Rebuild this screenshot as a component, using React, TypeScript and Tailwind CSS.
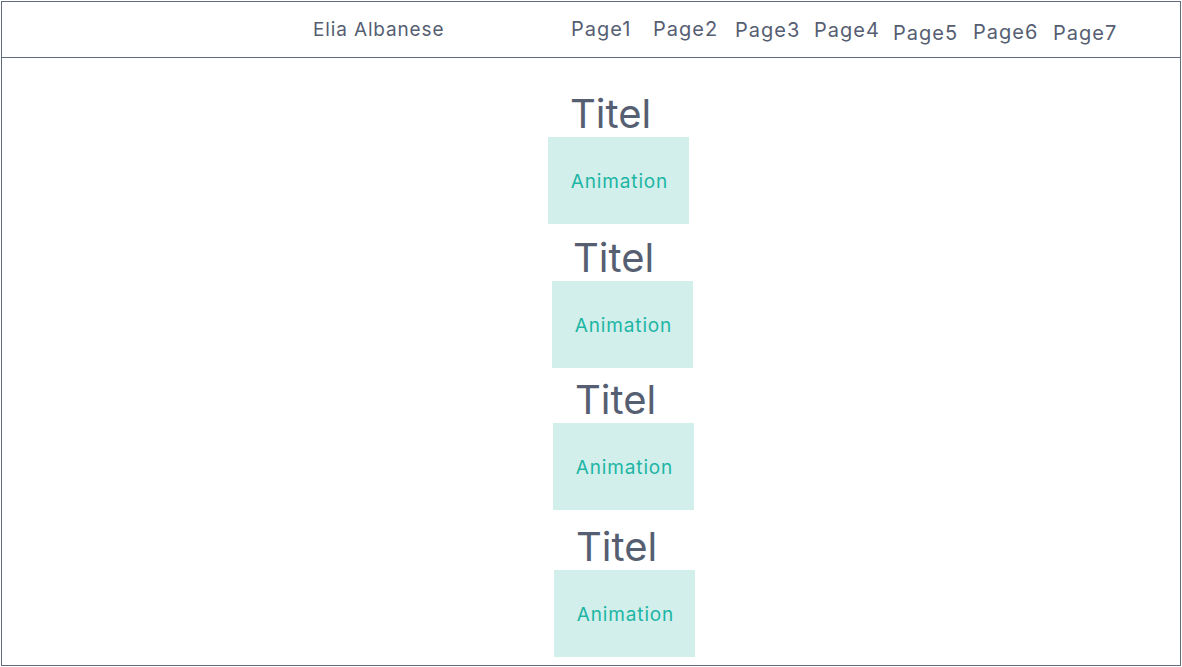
const pages = [
  { label: 'Page1', w: 'w-[82px]', mt: 'mt-0' },
  { label: 'Page2', w: 'w-[82px]', mt: 'mt-0' },
  { label: 'Page3', w: 'w-[79px]', mt: 'mt-[1px]' },
  { label: 'Page4', w: 'w-[79px]', mt: 'mt-[1px]' },
  { label: 'Page5', w: 'w-[80px]', mt: 'mt-[4px]' },
  { label: 'Page6', w: 'w-[80px]', mt: 'mt-[3px]' },
  { label: 'Page7', w: 'w-[80px]', mt: 'mt-[4px]' },
];

const sections = [
  { titleMl: 'ml-[568px]', titleMt: 'mt-[36px]', boxMl: 'ml-[546px]' },
  { titleMl: 'ml-[571px]', titleMt: 'mt-[14px]', boxMl: 'ml-[550px]' },
  { titleMl: 'ml-[573px]', titleMt: 'mt-[12px]', boxMl: 'ml-[551px]' },
  { titleMl: 'ml-[574px]', titleMt: 'mt-[17px]', boxMl: 'ml-[552px]' },
];

function Section({ titleMl, titleMt, boxMl }: { titleMl: string; titleMt: string; boxMl: string }) {
  return (
    <div className="flex flex-col items-start">
      <h2 className={`${titleMl} ${titleMt} text-[40px] leading-[40px] text-[#565e72]`}>Titel</h2>
      <div className={`${boxMl} mt-[3px] w-[141px] h-[87px] pt-[4px] pl-[2px] bg-[#d2efec] flex items-center justify-center`}>
        <span className="text-[19px] tracking-[0.045em] text-[#1db5a4]">Animation</span>
      </div>
    </div>
  );
}

export default function App() {
  return (
    <div className="w-[1182px] h-[667px] bg-white pt-px pl-px overflow-hidden" style={{ fontFamily: 'Inter, "Noto Sans", sans-serif' }}>
      <div className="w-[1180px] h-[665px] border border-[#626a7d]">
        <header className="h-[56px] border-b border-[#626a7d] flex items-start pt-[16px] leading-[24px] text-[#565e72]">
          <span className="ml-[311px] w-[258px] text-[19px] tracking-[0.045em]">Elia Albanese</span>
          <nav className="flex items-start -mt-[1px] text-[20px] tracking-[0.05em]">
            {pages.map((p) => (
              <a key={p.label} href="#" className={`${p.w} ${p.mt}`}>
                {p.label}
              </a>
            ))}
          </nav>
        </header>
        <main className="flex flex-col">
          {sections.map((s, i) => (
            <Section key={i} {...s} />
          ))}
        </main>
      </div>
    </div>
  );
}
